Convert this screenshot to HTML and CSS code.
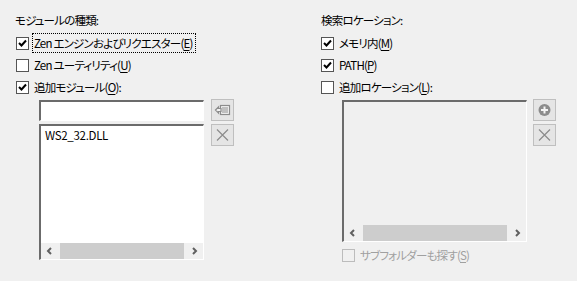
FILE: index.html
```html
<!DOCTYPE html>
<html lang="ja">
<head>
  <meta charset="UTF-8" />
  <title>検索設定</title>
  <link rel="stylesheet" href="styles.css">
</head>
<body>

<div class="dialog">

  <!-- モジュールの種類 -->
  <div class="column left">
    <div class="group-title">モジュールの種類:</div>

    <div class="check-row">
      <span class="box checked"><svg viewBox="0 0 11 11"><path d="M2 5 L4.5 7.5 L9 2.5" /></svg></span>
      <span class="label focus">Zen エンジンおよびリクエスター(<u>E</u>)</span>
    </div>
    <div class="check-row">
      <span class="box"></span>
      <span class="label">Zen ユーティリティ(<u>U</u>)</span>
    </div>
    <div class="check-row">
      <span class="box checked"><svg viewBox="0 0 11 11"><path d="M2 5 L4.5 7.5 L9 2.5" /></svg></span>
      <span class="label">追加モジュール(<u>O</u>):</span>
    </div>

    <div class="editor editor-modules">
      <div class="fields">
        <div class="textbox"></div>
        <div class="listbox tall">
          <div class="items">
            <div class="item">WS2_32.DLL</div>
          </div>
          <div class="hscroll">
            <span class="arrow"><svg viewBox="0 0 7 8"><path d="M5 1 L2 4 L5 7" /></svg></span>
            <span class="track"><span class="thumb"></span></span>
            <span class="arrow"><svg viewBox="0 0 7 8"><path d="M2 1 L5 4 L2 7" /></svg></span>
          </div>
        </div>
      </div>
      <div class="buttons">
        <button class="tool">
          <svg viewBox="0 0 17 14">
            <rect x="6.5" y="2.5" width="9" height="9" fill="#f4f4f4" />
            <path d="M8 5 H14 M8 7 H14 M8 9 H14" />
            <path d="M1.5 7 L4.5 4 V5.5 H7 V8.5 H4.5 V10 Z" fill="#f4f4f4" />
          </svg>
        </button>
        <button class="tool">
          <svg viewBox="0 0 17 14"><path d="M3 1.5 L14 12.5 M14 1.5 L3 12.5" /></svg>
        </button>
      </div>
    </div>
  </div>

  <!-- 検索ロケーション -->
  <div class="column right">
    <div class="group-title">検索ロケーション:</div>

    <div class="check-row">
      <span class="box checked"><svg viewBox="0 0 11 11"><path d="M2 5 L4.5 7.5 L9 2.5" /></svg></span>
      <span class="label">メモリ内(<u>M</u>)</span>
    </div>
    <div class="check-row">
      <span class="box checked"><svg viewBox="0 0 11 11"><path d="M2 5 L4.5 7.5 L9 2.5" /></svg></span>
      <span class="label">PATH(<u>P</u>)</span>
    </div>
    <div class="check-row">
      <span class="box"></span>
      <span class="label">追加ロケーション(<u>L</u>):</span>
    </div>

    <div class="editor editor-locations">
      <div class="fields">
        <div class="listbox short disabled">
          <div class="items"></div>
          <div class="hscroll">
            <span class="arrow"><svg viewBox="0 0 7 8"><path d="M5 1 L2 4 L5 7" /></svg></span>
            <span class="track"><span class="thumb"></span></span>
            <span class="arrow"><svg viewBox="0 0 7 8"><path d="M2 1 L5 4 L2 7" /></svg></span>
          </div>
        </div>
        <div class="check-row sub disabled">
          <span class="box"></span>
          <span class="label">サブフォルダーも探す(<u>S</u>)</span>
        </div>
      </div>
      <div class="buttons">
        <button class="tool">
          <svg viewBox="0 0 17 14">
            <circle cx="8.5" cy="7" r="6" fill="#8c8c8c" stroke="none" />
            <path d="M8.5 3.5 V10.5 M5 7 H12" stroke="#f4f4f4" stroke-width="2" />
          </svg>
        </button>
        <button class="tool">
          <svg viewBox="0 0 17 14"><path d="M3 1.5 L14 12.5 M14 1.5 L3 12.5" /></svg>
        </button>
      </div>
    </div>
  </div>

</div>

</body>
</html>
```

FILE: styles.css
```css
* {
  margin: 0;
  padding: 0;
  box-sizing: border-box;
}
body, html {
  width: 577px;
  height: 281px;
  background: #f0f0f0;
  font-family: 'Noto Sans CJK JP', 'Noto Sans', sans-serif;
  font-size: 11.5px;
  letter-spacing: -0.8px;
  font-feature-settings: "palt";
  color: #000;
  overflow: hidden;
}

.dialog {
  display: grid;
  grid-template-columns: 305px 257px;
  padding-left: 15px;
}

.column {
  display: flex;
  flex-direction: column;
}

.group-title {
  height: 16px;
  line-height: 16px;
  margin-top: 12px;
  margin-bottom: 4px;
}
.right .group-title {
  padding-left: 1px;
}

/* チェックボックス */
.check-row {
  display: flex;
  align-items: center;
  height: 22px;
  padding-left: 1px;
}

.box {
  width: 13px;
  height: 13px;
  border: 1px solid #555;
  background: #fff;
  margin-right: 3px;
  display: flex;
  align-items: center;
  justify-content: center;
  flex-shrink: 0;
}
.box svg {
  width: 11px;
  height: 11px;
  fill: none;
  stroke: #000;
  stroke-width: 2;
}

.label {
  border: 1px dotted transparent;
  padding: 1px 2px 1px 1px;
  line-height: 16px;
  white-space: nowrap;
}
.label.focus {
  border-color: #000;
}
.label u {
  text-decoration-thickness: 1px;
  text-underline-offset: 2px;
}

.check-row.disabled .box {
  border-color: #bcbcbc;
  background: #f0f0f0;
}
.check-row.disabled .label {
  color: #a0a0a0;
}

/* 追加リスト */
.editor {
  display: flex;
  margin-top: 2px;
}
.editor-modules {
  padding-left: 24px;
  gap: 7px;
}
.editor-locations {
  padding-left: 22px;
  gap: 6px;
}

.fields {
  display: flex;
  flex-direction: column;
}
.editor-modules .fields {
  width: 165px;
  gap: 3px;
}
.editor-locations .fields {
  width: 185px;
}

.textbox {
  height: 21px;
  background: #fff;
  border-top: 2px solid #6b6b6b;
  border-left: 2px solid #6b6b6b;
  border-right: 1px solid #fff;
  border-bottom: 1px solid #fff;
}

.listbox {
  display: flex;
  flex-direction: column;
  background: #fff;
  border-top: 2px solid #6b6b6b;
  border-left: 2px solid #6b6b6b;
  border-right: 1px solid #fff;
  border-bottom: 1px solid #fff;
}
.listbox.tall {
  height: 136px;
}
.listbox.short {
  height: 142px;
}
.listbox.disabled {
  background: #f0f0f0;
}

.items {
  flex: 1;
}
.item {
  height: 17px;
  line-height: 18px;
  padding-left: 4px;
  letter-spacing: -0.3px;
}

.hscroll {
  display: flex;
  height: 16px;
  background: #f0f0f0;
}
.arrow {
  width: 17px;
  display: flex;
  align-items: center;
  justify-content: center;
}
.arrow svg {
  width: 7px;
  height: 8px;
  fill: none;
  stroke: #606060;
  stroke-width: 2;
}
.track {
  flex: 1;
  display: flex;
}
.thumb {
  flex: 1;
  background: #cdcdcd;
  margin: 0 2px;
}

.sub {
  margin-top: 2px;
  padding-left: 0;
}

/* ツールボタン */
.buttons {
  display: flex;
  flex-direction: column;
  gap: 3px;
  margin-top: -1px;
}
.tool {
  width: 23px;
  height: 22px;
  background: #e5e5e5;
  border: 1px solid #bfbfbf;
  display: flex;
  align-items: center;
  justify-content: center;
}
.tool svg {
  width: 17px;
  height: 14px;
  fill: none;
  stroke: #8c8c8c;
  stroke-width: 1.2;
}
```
